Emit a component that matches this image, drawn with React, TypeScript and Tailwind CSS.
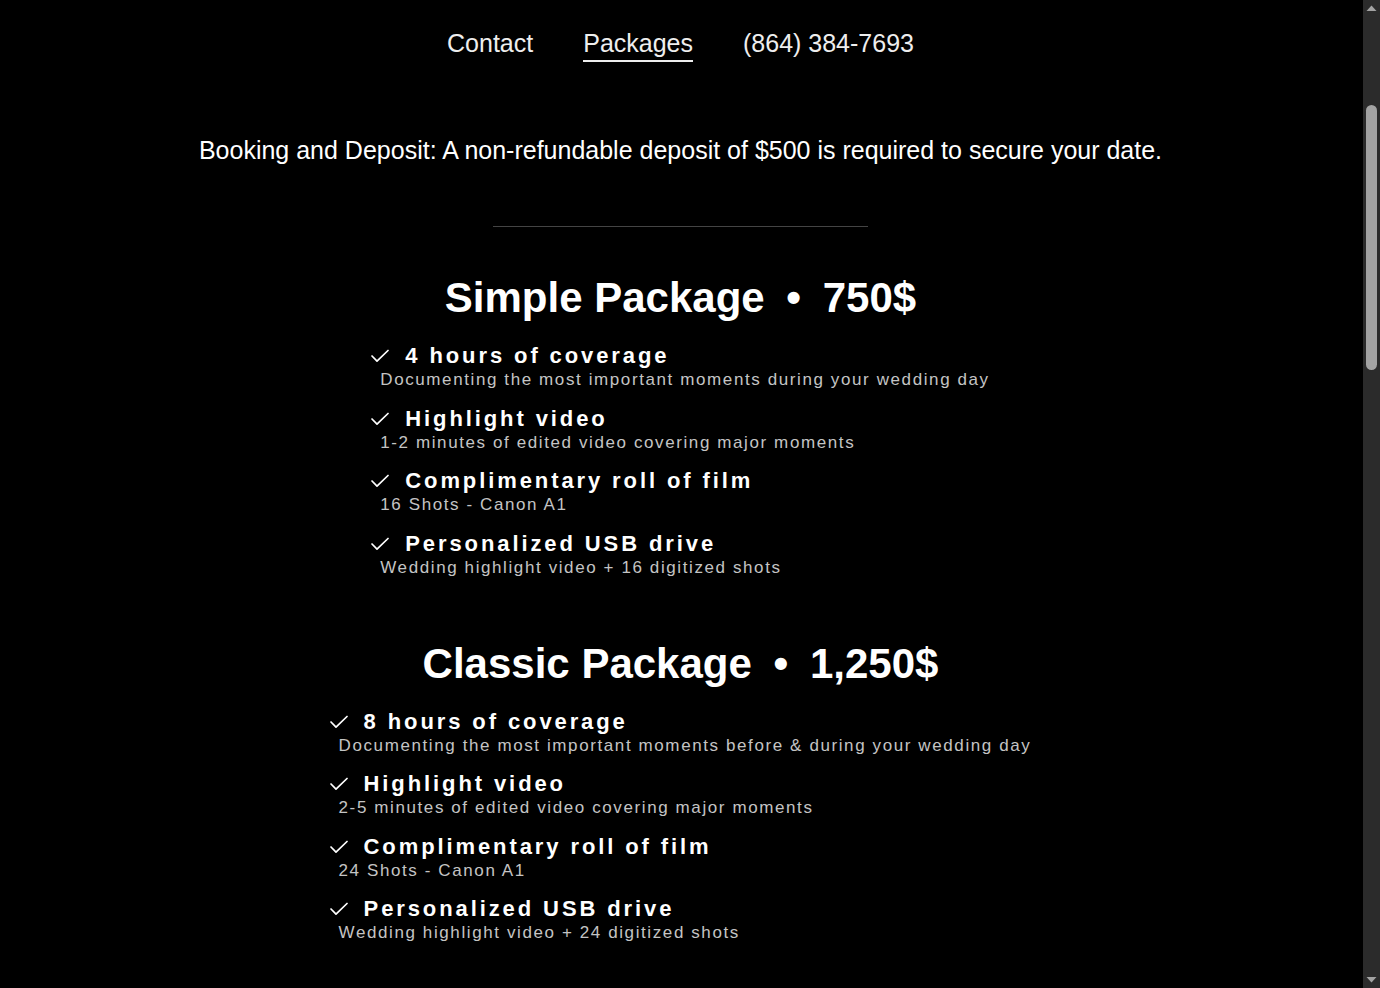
import React from "react";

type Item = { title: string; sub: string };

const simple: Item[] = [
  { title: "4 hours of coverage", sub: "Documenting the most important moments during your wedding day" },
  { title: "Highlight video", sub: "1-2 minutes of edited video covering major moments" },
  { title: "Complimentary roll of film", sub: "16 Shots - Canon A1" },
  { title: "Personalized USB drive", sub: "Wedding highlight video + 16 digitized shots" },
];

const classic: Item[] = [
  { title: "8 hours of coverage", sub: "Documenting the most important moments before & during your wedding day" },
  { title: "Highlight video", sub: "2-5 minutes of edited video covering major moments" },
  { title: "Complimentary roll of film", sub: "24 Shots - Canon A1" },
  { title: "Personalized USB drive", sub: "Wedding highlight video + 24 digitized shots" },
];

function Check() {
  return (
    <svg width="18" height="14" viewBox="0 0 18 14" fill="none" className="shrink-0">
      <polyline points="1,7 6,12.2 17,1.5" stroke="#ffffff" strokeWidth="1.7" strokeLinecap="round" strokeLinejoin="round" />
    </svg>
  );
}

function Package({ name, price, items }: { name: string; price: string; items: Item[] }) {
  return (
    <section className="flex flex-col items-center">
      <h2 className="text-[42px] leading-[48px] font-bold text-white">
        {name} <span className="mx-[10px]">•</span> {price}
      </h2>
      <ul className="mt-[21px] flex w-fit flex-col gap-[15.5px]">
        {items.map((it, i) => (
          <li key={i} className="flex flex-col gap-[1px]">
            <div className="flex items-center gap-[16px]">
              <Check />
              <span className="text-[22px] leading-[26px] font-bold tracking-[2.9px] text-white">{it.title}</span>
            </div>
            <span className="pl-[9px] text-[17px] leading-[20px] tracking-[1.6px] text-[#c4c4c4]">{it.sub}</span>
          </li>
        ))}
      </ul>
    </section>
  );
}

function Scrollbar() {
  return (
    <aside className="flex h-full w-[17px] shrink-0 flex-col items-center bg-[#2b2b2b]">
      <svg width="17" height="17" viewBox="0 0 17 17" className="shrink-0">
        <polygon points="3.5,11 8.5,5.5 13.5,11" fill="#a3a3a3" />
      </svg>
      <div className="mt-[88px] h-[265px] w-[11px] rounded-full bg-[#a3a3a3]" />
      <div className="flex-1" />
      <svg width="17" height="17" viewBox="0 0 17 17" className="shrink-0">
        <polygon points="3.5,6 8.5,11.5 13.5,6" fill="#a3a3a3" />
      </svg>
    </aside>
  );
}

export default function App() {
  return (
    <div
      className="flex h-screen overflow-hidden bg-black text-white"
      style={{ fontFamily: '"Liberation Sans", Arial, sans-serif' }}
    >
      <main className="min-w-0 flex-1 pr-[2px]">
        <nav className="flex justify-center gap-[50px] pt-[29px] text-[25px] leading-[29px] text-[#eeeeee]">
          <a className="pb-[2px]">Contact</a>
          <a className="border-b-2 border-[#eeeeee] pb-[2px]">Packages</a>
          <a className="pb-[2px]">(864) 384-7693</a>
        </nav>
        <p className="mt-[74px] text-center text-[25px] leading-[29px] text-white">
          Booking and Deposit: A non-refundable deposit of $500 is required to secure your date.
        </p>
        <div className="mx-auto mt-[61px] h-px w-[375px] bg-[#444444]" />
        <div className="mt-[47px] flex flex-col gap-[62px]">
          <Package name="Simple Package" price="750$" items={simple} />
          <Package name="Classic Package" price="1,250$" items={classic} />
        </div>
      </main>
      <Scrollbar />
    </div>
  );
}
